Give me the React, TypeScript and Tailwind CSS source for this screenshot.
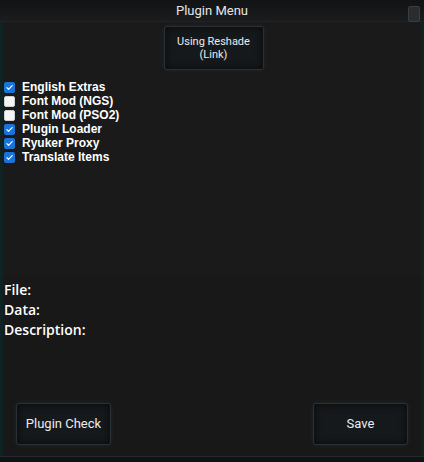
import React from "react";

const plugins = [
  { name: "English Extras", on: true },
  { name: "Font Mod (NGS)", on: false },
  { name: "Font Mod (PSO2)", on: false },
  { name: "Plugin Loader", on: true },
  { name: "Ryuker Proxy", on: true },
  { name: "Translate Items", on: true },
];

const Check: React.FC<{ on: boolean }> = ({ on }) =>
  on ? (
    <span className="w-[11px] h-[11px] rounded-[2px] bg-[#1a73d9] flex items-center justify-center">
      <svg viewBox="0 0 12 12" className="w-[9px] h-[9px]" fill="none" stroke="#fff" strokeWidth="1.6">
        <path d="M2.5 6.2l2.2 2.2 4.8-5" strokeLinecap="round" strokeLinejoin="round" />
      </svg>
    </span>
  ) : (
    <span className="w-[11px] h-[11px] rounded-[2px] bg-[#f4f4f4] border border-[#d0d0d0]" />
  );

const GameButton: React.FC<{ children: React.ReactNode; className?: string }> = ({ children, className }) => (
  <button
    className={`bg-[#16191c] border border-[#2a3034] rounded-[3px] shadow-[inset_0_0_8px_rgba(0,0,0,0.7),0_0_4px_rgba(40,50,55,0.5)] text-[#ececec] flex items-center justify-center ${className ?? ""}`}
    style={{ fontFamily: "Roboto, 'Noto Sans', sans-serif" }}
  >
    {children}
  </button>
);

export default function App() {
  return (
    <div className="w-[424px] h-[462px] bg-[#1a1a1a] flex flex-col overflow-hidden relative">
      {/* title bar */}
      <div className="h-[22px] shrink-0 bg-gradient-to-b from-[#121314] to-[#1b1c1d] border-b border-[#222] flex items-center justify-center relative">
        <span className="text-[13px] text-[#e6e6e6]" style={{ fontFamily: "Roboto, 'Noto Sans', sans-serif" }}>
          Plugin Menu
        </span>
        <div className="absolute right-[4px] top-[6px] w-[12px] h-[16px] bg-[#2a2d30] border border-[#3a3e42] rounded-[2px]" />
      </div>

      <div className="flex-1 flex flex-col border-l-[3px] border-l-[#0f2322] border-r-[3px] border-r-[#0f2322]">
        {/* plugin list */}
        <div className="h-[253px] shrink-0 flex flex-col">
          <div className="flex justify-center pt-[4px] pl-[3px]">
            <GameButton className="w-[100px] h-[44px] text-[11px] leading-[13px] flex-col">
              <span>Using Reshade</span>
              <span>(Link)</span>
            </GameButton>
          </div>
          <div
            className="flex flex-col pt-[10px] pl-[1px]"
            style={{ fontFamily: "'Liberation Sans', Arial, sans-serif" }}
          >
            {plugins.map((p) => (
              <label key={p.name} className="h-[14px] flex items-center gap-[7px] text-[12px] font-bold text-white">
                <Check on={p.on} />
                <span>{p.name}</span>
              </label>
            ))}
          </div>
        </div>

        {/* info */}
        <div
          className="flex-1 bg-[#181818] flex flex-col pt-[5px] pl-[1px] text-[14px] leading-[20px] font-semibold text-white"
          style={{ fontFamily: "'Open Sans', 'Noto Sans', sans-serif" }}
        >
          <span>File:</span>
          <span>Data:</span>
          <span>Description:</span>
          <div className="flex-1" />
          <div className="flex justify-between pl-[12px] pr-[13px] pb-[11px]">
            <GameButton className="w-[95px] h-[42px] text-[13px] font-normal">Plugin Check</GameButton>
            <GameButton className="w-[95px] h-[42px] text-[13px] font-normal">Save</GameButton>
          </div>
        </div>
      </div>
      <div className="h-[6px] shrink-0 bg-[#0f1315] border-t border-[#262a2d]" />
    </div>
  );
}
